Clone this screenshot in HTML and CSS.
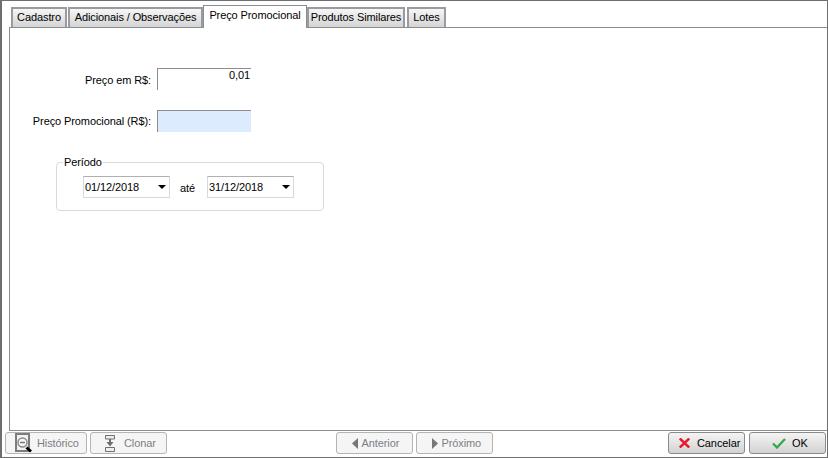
FILE: index.html
```html
<!DOCTYPE html>
<html lang="pt">
<head>
<meta charset="utf-8">
<title>Preço Promocional</title>
<link rel="stylesheet" href="styles.css">
</head>
<body>
<div class="window">
  <nav class="tabs">
    <div class="tab">Cadastro</div>
    <div class="tab tab-wide">Adicionais / Observações</div>
    <div class="tab active">Preço Promocional</div>
    <div class="tab tab-sim">Produtos Similares</div>
    <div class="tab tab-lotes">Lotes</div>
  </nav>
  <main class="panel">
    <div class="row row-first">
      <label class="label">Preço em R$:</label>
      <div class="field field-value">0,01</div>
    </div>
    <div class="row row-second">
      <label class="label">Preço Promocional (R$):</label>
      <div class="field field-input"></div>
    </div>
    <fieldset class="period">
      <legend>Período</legend>
      <div class="combo"><span>01/12/2018</span><i class="arrow"></i></div>
      <span class="until">até</span>
      <div class="combo"><span>31/12/2018</span><i class="arrow"></i></div>
    </fieldset>
  </main>
  <footer class="bar">
    <div class="group">
      <button class="btn off b-hist">
        <svg class="ic-hist" width="18" height="20" viewBox="0 0 18 20"><rect x="1" y="1" width="13" height="17" fill="#f1f1f1" stroke="#7d7d7d" stroke-width="2"/><circle cx="7.500" cy="9.500" r="4.500" fill="#f6f6f6" stroke="#8a8a8a" stroke-width="1.500"/><path d="M5 9.500h5" stroke="#777" stroke-width="1.500"/><path d="M11.500 14.500l4.500 4" stroke="#000" stroke-width="3"/></svg>
        Histórico
      </button>
      <button class="btn off b-clone">
        <svg class="ic-clone" width="10" height="17" viewBox="0 0 10 17"><path d="M.5.5h9v3.500h-9zM.5 12.500h9v4h-9z" fill="#eee" stroke="#6f6f6f"/><path d="M5 4v3" stroke="#6f6f6f" stroke-width="2"/><path d="M1.500 7h7L5 11.500z" fill="#6f6f6f"/></svg>
        Clonar
      </button>
    </div>
    <div class="group group-mid">
      <button class="btn off b-prev"><svg class="ic-nav" width="6" height="11" viewBox="0 0 6 11"><path d="M6 0v11L0 5.500z" fill="#777"/></svg>Anterior</button>
      <button class="btn off b-next"><svg class="ic-nav" width="6" height="11" viewBox="0 0 6 11"><path d="M0 0v11l6-5.500z" fill="#777"/></svg>Próximo</button>
    </div>
    <div class="group group-end">
      <button class="btn on b-cancel"><svg class="ic-x" width="11" height="10" viewBox="0 0 11 10"><path d="M.8.500l9.400 9M10.200.500l-9.400 9" stroke="#e8192c" stroke-width="2.400"/></svg>Cancelar</button>
      <button class="btn on b-ok"><svg class="ic-ok" width="14" height="11" viewBox="0 0 14 11"><path d="M1 5.500l4 4L13 1" fill="none" stroke="#2fa84a" stroke-width="2.200"/></svg>OK</button>
    </div>
  </footer>
</div>
</body>
</html>
```
FILE: styles.css
```css
* { box-sizing: border-box; }
html, body { margin: 0; padding: 0; }
body { width: 828px; height: 458px; background: #f0f0f0; font: 11px "Liberation Sans", Arial, sans-serif; letter-spacing: -0.1px; color: #000; overflow: hidden; }
.window { width: 828px; height: 458px; border: solid #6e6e6e; border-width: 1px 1px 1px 2px; background: #fff; display: flex; flex-direction: column; padding-left: 7px; }
.tabs { display: flex; align-items: flex-end; height: 26px; padding-left: 2px; position: relative; z-index: 1; }
.tab { height: 20px; width: 56px; margin-right: 1px; border: 2px solid #9a9aa0; border-bottom: 0; background: linear-gradient(#f6f6f6, #d4d4d4); text-align: center; line-height: 17px; white-space: nowrap; }
.tab-wide { width: 135px; margin-right: 0; }
.tab-sim { width: 98px; margin-right: 2px; }
.tab-lotes { width: 39px; }
.tab.active { width: 104px; margin-right: 0; border: 1px solid #8c8c93; border-bottom: 0; background: #fff; line-height: 19px; padding-bottom: 2px; height: 23px; margin-bottom: -1px; }
.panel { height: 404px; border: 1px solid #8c8c93; border-right: 0; background: #fff; display: flex; flex-direction: column; }
.row { display: flex; align-items: flex-start; }
.row-first { margin-top: 40px; }
.row-second { margin-top: 20px; }
.label { width: 147px; padding-right: 6px; text-align: right; height: 22px; line-height: 24px; }
.row-second .label { line-height: 22px; }
.field { width: 94px; height: 22px; border-top: 1px solid #8d8d8d; border-left: 1px solid #8d8d8d; }
.field-value { text-align: right; line-height: 13px; padding-right: 1px; }
.field-input { background: #dcebfd; }
.period { margin: 30px 0 0 46px; width: 268px; height: 49px; border: 1px solid #d3dbe3; border-radius: 4px; padding: 13px 0 0 26px; display: flex; align-items: flex-start; position: relative; }
.period legend { padding: 0 1px; margin-left: 6px; line-height: 12px; position: absolute; top: -7px; left: 0; background: #fff; }
.combo { width: 87px; height: 22px; border: 1px solid #d6d9dd; border-top-color: #b0b0b0; display: flex; align-items: center; justify-content: space-between; padding: 0 3px 0 1px; }
.arrow { width: 0; height: 0; border: solid transparent; border-width: 4px 4px 0; border-top-color: #000; }
.until { width: 37px; padding-right: 2px; text-align: center; line-height: 25px; }
.bar { flex: 1; display: flex; justify-content: space-between; align-items: flex-start; padding-top: 1px; margin-left: -4px; }
.group { display: flex; gap: 3px; }
.group-mid { margin-left: -7px; }
.group-end { gap: 4px; }
.btn { height: 22px; padding: 0; font: inherit; letter-spacing: inherit; border: 1px solid #b4b4b4; border-radius: 3px; display: flex; align-items: center; justify-content: flex-start; }
.btn.off { background: #f5f5f5; color: #7b7f85; }
.btn.on { background: linear-gradient(#f4f4f4, #d2d2d2); border-color: #8a8a8a; color: #000; }
.b-hist { width: 82px; padding-left: 9px; }
.b-clone { width: 77px; padding-left: 14px; }
.b-prev, .b-next { width: 77px; padding-left: 15px; }
.b-cancel { width: 77px; padding-left: 10px; }
.b-ok { width: 77px; padding-left: 22px; margin-right: 1px; }
.ic-hist { margin-right: 4px; }
.ic-clone { margin-right: 9px; }
.ic-nav { margin-right: 4px; }
.ic-x { margin-right: 7px; }
.ic-ok { margin-right: 6px; }
```
